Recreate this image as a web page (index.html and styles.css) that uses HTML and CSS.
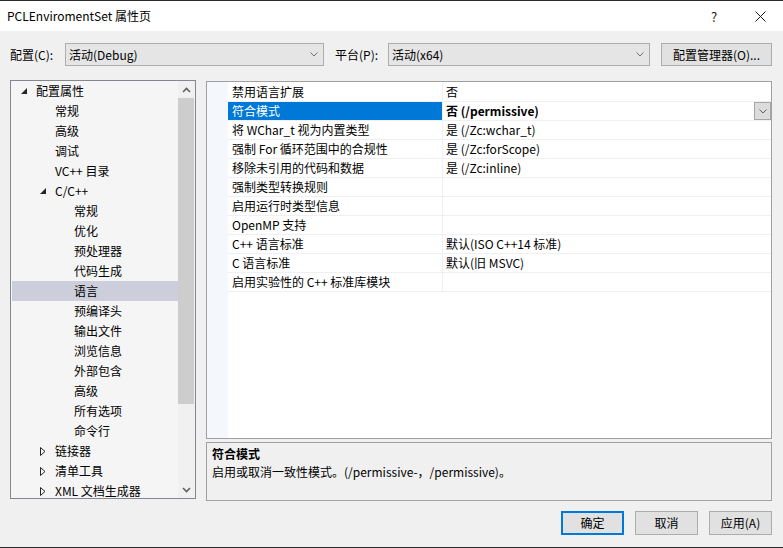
FILE: index.html
```html
<!DOCTYPE html>
<html lang="zh-CN">
<head>
<meta charset="utf-8">
<title>PCLEnviromentSet 属性页</title>
<link rel="stylesheet" href="styles.css">
</head>
<body>
<div class="window">
  <div class="titlebar">
    <span class="title">PCLEnviromentSet 属性页</span>
    <div class="caption-btns">
      <span class="cap-btn help">?</span>
      <span class="cap-btn close"><svg width="11" height="11" viewBox="0 0 11 11"><path d="M0.5 0.5 L10.5 10.5 M10.5 0.5 L0.5 10.5" stroke="#1a1a1a" stroke-width="1" fill="none"/></svg></span>
    </div>
  </div>

  <div class="toolbar">
    <span class="lbl lbl-config">配置(C):</span>
    <div class="combo combo-config"><span>活动(Debug)</span><svg class="chev" width="8" height="5" viewBox="0 0 8 5"><path d="M0.5 0.5 L4 4 L7.5 0.5" stroke="#707070" fill="none"/></svg></div>
    <span class="lbl lbl-platform">平台(P):</span>
    <div class="combo combo-platform"><span>活动(x64)</span><svg class="chev" width="8" height="5" viewBox="0 0 8 5"><path d="M0.5 0.5 L4 4 L7.5 0.5" stroke="#707070" fill="none"/></svg></div>
    <button class="btn btn-manager">配置管理器(O)...</button>
  </div>

  <div class="main">
    <div class="tree">
      <ul class="tree-list">
        <li class="node lvl0"><span class="twisty"><svg width="6" height="6" viewBox="0 0 6 6"><path d="M6 0 L6 6 L0 6 Z" fill="#262626"/></svg></span><span>配置属性</span></li>
        <li class="node lvl1"><span class="twisty"></span><span>常规</span></li>
        <li class="node lvl1"><span class="twisty"></span><span>高级</span></li>
        <li class="node lvl1"><span class="twisty"></span><span>调试</span></li>
        <li class="node lvl1"><span class="twisty"></span><span>VC++ 目录</span></li>
        <li class="node lvl1"><span class="twisty"><svg width="6" height="6" viewBox="0 0 6 6"><path d="M6 0 L6 6 L0 6 Z" fill="#262626"/></svg></span><span>C/C++</span></li>
        <li class="node lvl2"><span class="twisty"></span><span>常规</span></li>
        <li class="node lvl2"><span class="twisty"></span><span>优化</span></li>
        <li class="node lvl2"><span class="twisty"></span><span>预处理器</span></li>
        <li class="node lvl2"><span class="twisty"></span><span>代码生成</span></li>
        <li class="node lvl2 selected"><span class="twisty"></span><span>语言</span></li>
        <li class="node lvl2"><span class="twisty"></span><span>预编译头</span></li>
        <li class="node lvl2"><span class="twisty"></span><span>输出文件</span></li>
        <li class="node lvl2"><span class="twisty"></span><span>浏览信息</span></li>
        <li class="node lvl2"><span class="twisty"></span><span>外部包含</span></li>
        <li class="node lvl2"><span class="twisty"></span><span>高级</span></li>
        <li class="node lvl2"><span class="twisty"></span><span>所有选项</span></li>
        <li class="node lvl2"><span class="twisty"></span><span>命令行</span></li>
        <li class="node lvl1"><span class="twisty"><svg width="6" height="9" viewBox="0 0 6 9"><path d="M0.5 0.5 L5 4.5 L0.5 8.5 Z" fill="none" stroke="#262626"/></svg></span><span>链接器</span></li>
        <li class="node lvl1"><span class="twisty"><svg width="6" height="9" viewBox="0 0 6 9"><path d="M0.5 0.5 L5 4.5 L0.5 8.5 Z" fill="none" stroke="#262626"/></svg></span><span>清单工具</span></li>
        <li class="node lvl1"><span class="twisty"><svg width="6" height="9" viewBox="0 0 6 9"><path d="M0.5 0.5 L5 4.5 L0.5 8.5 Z" fill="none" stroke="#262626"/></svg></span><span>XML 文档生成器</span></li>
      </ul>
      <div class="scrollbar">
        <div class="sb-arrow"><svg width="9" height="6" viewBox="0 0 9 6"><path d="M1 5 L4.5 1.5 L8 5" stroke="#606060" stroke-width="1.6" fill="none"/></svg></div>
        <div class="sb-track"><div class="sb-thumb"></div></div>
        <div class="sb-arrow"><svg width="9" height="6" viewBox="0 0 9 6"><path d="M1 1 L4.5 4.5 L8 1" stroke="#606060" stroke-width="1.6" fill="none"/></svg></div>
      </div>
    </div>

    <div class="right">
      <div class="grid">
        <div class="gutter"></div>
        <div class="rows">
          <div class="row"><div class="name">禁用语言扩展</div><div class="value">否</div></div>
          <div class="row active"><div class="name">符合模式</div><div class="value"><b>否 (/permissive)</b><span class="drop"><svg width="8" height="5" viewBox="0 0 8 5"><path d="M0.5 0.5 L4 4 L7.5 0.5" stroke="#606060" fill="none"/></svg></span></div></div>
          <div class="row"><div class="name">将 WChar_t 视为内置类型</div><div class="value">是 (/Zc:wchar_t)</div></div>
          <div class="row"><div class="name">强制 For 循环范围中的合规性</div><div class="value">是 (/Zc:forScope)</div></div>
          <div class="row"><div class="name">移除未引用的代码和数据</div><div class="value">是 (/Zc:inline)</div></div>
          <div class="row"><div class="name">强制类型转换规则</div><div class="value"></div></div>
          <div class="row"><div class="name">启用运行时类型信息</div><div class="value"></div></div>
          <div class="row"><div class="name">OpenMP 支持</div><div class="value"></div></div>
          <div class="row"><div class="name">C++ 语言标准</div><div class="value">默认(ISO C++14 标准)</div></div>
          <div class="row"><div class="name">C 语言标准</div><div class="value">默认(旧 MSVC)</div></div>
          <div class="row"><div class="name">启用实验性的 C++ 标准库模块</div><div class="value"></div></div>
        </div>
      </div>
      <div class="desc">
        <div class="desc-title">符合模式</div>
        <div class="desc-text">启用或取消一致性模式。(/permissive-，/permissive)。</div>
      </div>
    </div>
  </div>

  <div class="footer">
    <button class="btn btn-ok">确定</button>
    <button class="btn">取消</button>
    <button class="btn">应用(A)</button>
  </div>
</div>
</body>
</html>
```

FILE: styles.css
```css
* { box-sizing: border-box; }
html, body { margin: 0; padding: 0; }
body {
  background: #f0f0f0;
  font-family: "Noto Sans CJK SC", "Noto Sans", sans-serif;
  font-size: 12px;
  color: #000;
}
.window {
  width: 783px;
  height: 548px;
  border-top: 1px solid #2b2b2b;
  border-bottom: 1px solid #2b2b2b;
  display: flex;
  flex-direction: column;
  overflow: hidden;
}
.titlebar {
  height: 30px;
  background: #fff;
  display: flex;
  align-items: center;
  padding-left: 7px;
  flex: none;
}
.title { line-height: 30px; }
.caption-btns { margin-left: auto; display: flex; height: 30px; }
.cap-btn {
  width: 46px;
  height: 30px;
  display: flex;
  align-items: center;
  justify-content: center;
}
.help { font-size: 13px; color: #1a1a1a; }

.toolbar {
  height: 49px;
  flex: none;
  display: flex;
  align-items: flex-start;
  padding: 12px 0 0 10px;
}
.lbl { line-height: 23px; height: 23px; white-space: nowrap; }
.lbl-config { width: 55px; }
.lbl-platform { width: 53px; }
.combo {
  height: 23px;
  border: 1px solid #adadad;
  background: #e5e5e5;
  display: flex;
  align-items: center;
  justify-content: space-between;
  padding: 0 5px 0 3px;
  line-height: 21px;
}
.combo-config { width: 259px; margin-right: 11px; }
.combo-platform { width: 262px; margin-right: 11px; }
.btn {
  font-family: inherit;
  font-size: 12px;
  color: #000;
  background: #e1e1e1;
  border: 1px solid #adadad;
  height: 24px;
  padding: 0;
  margin: 0;
  line-height: 20px;
}
.btn-manager { width: 111px; height: 23px; }

.main {
  height: 421px;
  flex: none;
  display: flex;
  gap: 10px;
  padding: 0 11px 0 10px;
}
.tree {
  width: 186px;
  height: 419px;
  border: 1px solid #828790;
  background: #f5f5f5;
  display: flex;
}
.tree-list {
  list-style: none;
  margin: 0;
  padding: 0;
  flex: 1;
  overflow: hidden;
}
.node {
  height: 20px;
  line-height: 20px;
  display: flex;
  align-items: center;
  margin-left: 1px;
  white-space: nowrap;
}
.node.lvl0 { padding-left: 9px; }
.node.lvl1 { padding-left: 28px; }
.node.lvl2 { padding-left: 47px; }
.twisty {
  width: 15px;
  flex: none;
  display: flex;
  align-items: center;
  height: 20px;
}
.node.selected { background: #cccedb; }
.scrollbar {
  width: 17px;
  flex: none;
  display: flex;
  flex-direction: column;
  background: #f0f0f0;
}
.sb-arrow {
  height: 17px;
  display: flex;
  align-items: center;
  justify-content: center;
  flex: none;
}
.sb-track { flex: 1; padding-left: 0; }
.sb-thumb {
  width: 16px;
  height: 306px;
  background: #cdcdcd;
}

.right {
  width: 566px;
  display: flex;
  flex-direction: column;
  gap: 3px;
  margin-top: 1px;
}
.grid {
  height: 358px;
  border: 1px solid #a0a0a0;
  background: #fff;
  display: flex;
}
.gutter {
  width: 21px;
  background: #f4f7fc;
  flex: none;
}
.rows { flex: 1; padding-top: 1px; }
.row {
  height: 19px;
  display: flex;
  border-bottom: 1px solid #eef0f3;
}
.name {
  width: 215px;
  flex: none;
  padding-left: 4px;
  line-height: 18px;
  border-right: 1px solid #eef0f3;
  white-space: nowrap;
}
.value {
  flex: 1;
  padding-left: 3px;
  line-height: 18px;
  display: flex;
  white-space: nowrap;
}
.row.active .name { background: #0078d7; color: #fff; }
.value b { font-weight: bold; }
.drop {
  margin-left: auto;
  width: 17px;
  height: 18px;
  background: #dcdcdc;
  border: 1px solid #a6a6a6;
  display: flex;
  align-items: center;
  justify-content: center;
}
.desc {
  height: 59px;
  border: 1px solid #a0a0a0;
  background: #f0f0f0;
  padding: 2px 5px;
}
.desc-title { font-weight: bold; line-height: 18px; }
.desc-text { line-height: 18px; }

.footer {
  flex: none;
  display: flex;
  justify-content: flex-end;
  gap: 11px;
  padding: 10px 11px 0 0;
}
.footer .btn { width: 63px; }
.btn-ok { border: 2px solid #0078d7; }
```
